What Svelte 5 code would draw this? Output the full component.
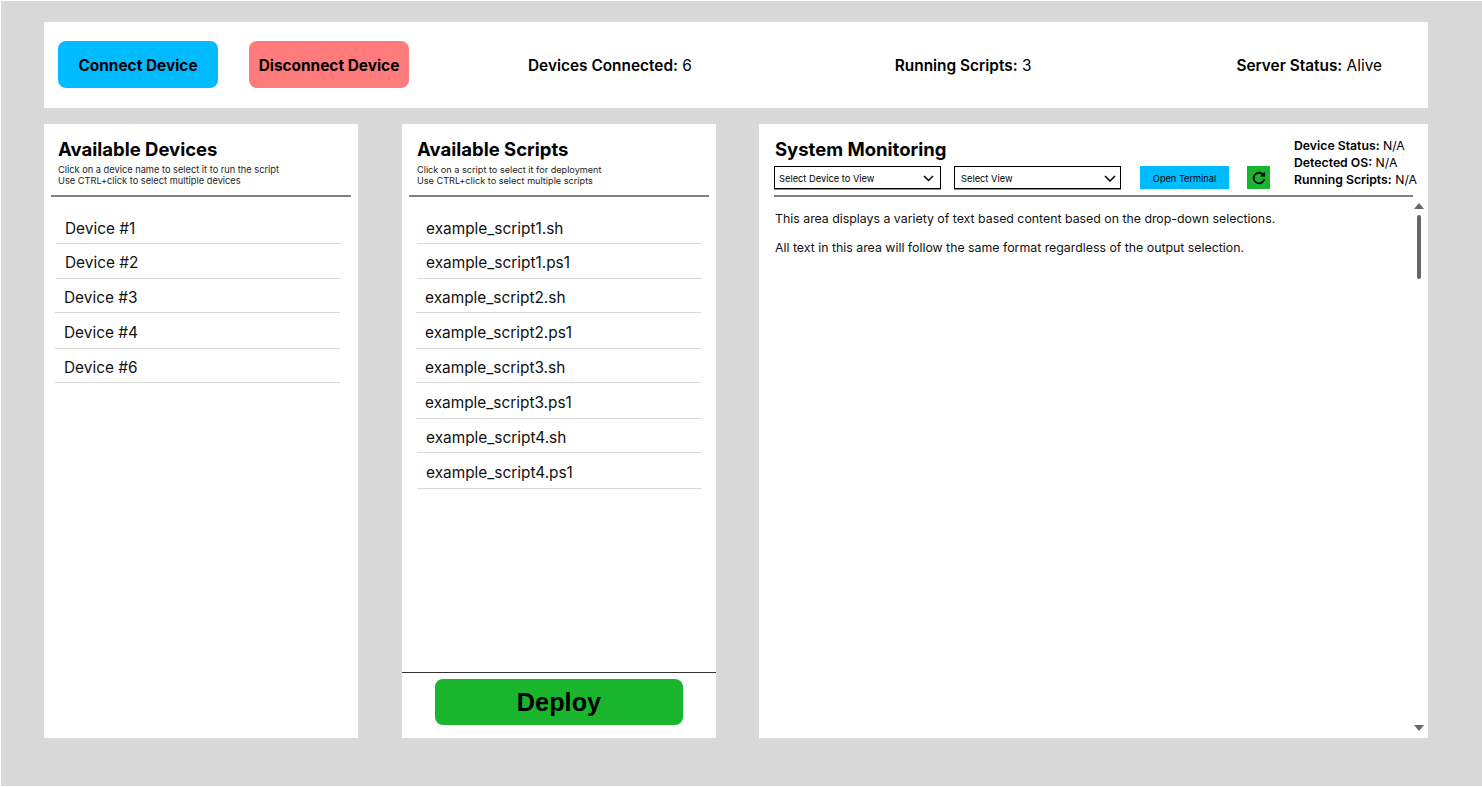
<script>
    const devices = [
        { name: 'Device #1', h: 34, shift: 1 },
        { name: 'Device #2', h: 35, shift: 1 },
        { name: 'Device #3', h: 34, shift: 0 },
        { name: 'Device #4', h: 36, shift: 0 },
        { name: 'Device #6', h: 34, shift: 0 }
    ]
    const scripts = [
        { name: 'example_script1.sh', h: 34, shift: 1 },
        { name: 'example_script1.ps1', h: 35, shift: 1 },
        { name: 'example_script2.sh', h: 34, shift: 0 },
        { name: 'example_script2.ps1', h: 36, shift: 0 },
        { name: 'example_script3.sh', h: 34, shift: 0 },
        { name: 'example_script3.ps1', h: 36, shift: 0 },
        { name: 'example_script4.sh', h: 34, shift: 1 },
        { name: 'example_script4.ps1', h: 36, shift: 1 }
    ]
</script>

<div class="frame">
    <header class="topbar">
        <button class="btn connect">Connect Device</button>
        <button class="btn disconnect">Disconnect Device</button>
        <div class="stat first"><b>Devices Connected:</b> 6</div>
        <div class="stat second"><b>Running Scripts:</b> 3</div>
        <div class="stat third"><b>Server Status:</b> Alive</div>
    </header>

    <main class="panels">
        <section class="panel devices">
            <div class="head">
                <h2>Available Devices</h2>
                <p>Click on a device name to select it to run the script<br />Use CTRL+click to select multiple devices</p>
            </div>
            <ul class="list">
                {#each devices as d}
                    <li class:shifted={d.shift} style="height:{d.h}px">{d.name}</li>
                {/each}
            </ul>
        </section>

        <section class="panel scripts">
            <div class="head">
                <h2>Available Scripts</h2>
                <p>Click on a script to select it for deployment<br />Use CTRL+click to select multiple scripts</p>
            </div>
            <ul class="list">
                {#each scripts as s}
                    <li class:shifted={s.shift} style="height:{s.h}px">{s.name}</li>
                {/each}
            </ul>
            <div class="deploy-row">
                <button class="deploy">Deploy</button>
            </div>
        </section>

        <section class="panel monitor">
            <div class="mon-head">
                <div class="mon-left">
                    <h2>System Monitoring</h2>
                    <div class="controls">
                        <div class="select">
                            <span>Select Device to View</span>
                            <svg width="11" height="7" viewBox="0 0 11 7"><path d="M1 1 5.5 5.5 10 1" fill="none" stroke="#000" stroke-width="1.5" /></svg>
                        </div>
                        <div class="select">
                            <span>Select View</span>
                            <svg width="12" height="7" viewBox="0 0 12 7"><path d="M1 1 6 6 11 1" fill="none" stroke="#000" stroke-width="1.5" /></svg>
                        </div>
                        <button class="terminal">Open Terminal</button>
                        <button class="refresh" aria-label="Refresh">
                            <svg width="14" height="14" viewBox="0 0 14 14">
                                <path d="M12.2 8.2A5.3 5.3 0 1 1 10.4 3" fill="none" stroke="#000" stroke-width="1.8" />
                                <path d="M8 5.6 13 5.8 12.8 .8Z" fill="#000" />
                            </svg>
                        </button>
                    </div>
                </div>
                <div class="mon-info">
                    <div><b>Device Status:</b> N/A</div>
                    <div><b>Detected OS:</b> N/A</div>
                    <div><b>Running Scripts:</b> N/A</div>
                </div>
            </div>
            <div class="output">
                <div class="text">
                    <p>This area displays a variety of text based content based on the drop-down selections.</p>
                    <p>All text in this area will follow the same format regardless of the output selection.</p>
                </div>
                <div class="scrollbar">
                    <span class="arrow up"></span>
                    <span class="thumb"></span>
                    <span class="arrow down"></span>
                </div>
            </div>
        </section>
    </main>
</div>

<style>
:global(body) {
    margin: 0;
    background: #fff;
}
* {
    box-sizing: border-box;
}
.frame {
    width: 1481px;
    height: 785px;
    margin: 1px 0 0 1px;
    padding: 21px 54px 0 43px;
    background: #d9d9d9;
    font-family: Inter, "Liberation Sans", sans-serif;
    color: #000;
}
.topbar {
    display: flex;
    align-items: center;
    height: 86px;
    padding-left: 14px;
    background: #fff;
}
button {
    border: none;
    font-family: inherit;
    color: #000;
    padding: 0;
}
.btn {
    width: 160px;
    height: 47px;
    margin-top: -1px;
    padding-top: 1px;
    border-radius: 8px;
    font-size: 15.4px;
    font-weight: 700;
}
.connect {
    background: #00bbff;
}
.disconnect {
    margin-left: 31px;
    background: #ff7b7b;
}
.stat {
    font-size: 15.4px;
    white-space: nowrap;
}
.stat b {
    font-weight: 600;
}
.first {
    margin-left: 119px;
}
.second {
    margin-left: 203px;
}
.third {
    margin-left: 205px;
}
.panels {
    display: flex;
    margin-top: 16px;
    height: 614px;
}
.panel {
    background: #fff;
    height: 100%;
}
.devices {
    width: 314px;
}
.scripts {
    width: 314px;
    margin-left: 44px;
    display: flex;
    flex-direction: column;
}
.monitor {
    width: 669px;
    margin-left: 43px;
    display: flex;
    flex-direction: column;
}
.head {
    height: 73px;
    margin: 0 7px;
    padding: 13px 0 0 7px;
    border-bottom: 2px solid #808080;
}
.scripts .head {
    padding-left: 8px;
}
h2 {
    margin: 0;
    font-size: 18.5px;
    line-height: 24px;
    font-weight: 700;
}
.head p {
    margin: 3px 0 0;
    font-size: 9.25px;
    line-height: 11px;
    color: #222;
}
.scripts .head p {
    font-size: 9.15px;
}
.list {
    list-style: none;
    margin: 13px 0 0;
    padding: 0;
    width: 285px;
}
.devices .list {
    margin-left: 12px;
}
.scripts .list {
    margin-left: 15px;
}
.list li {
    display: flex;
    align-items: center;
    padding: 3px 0 0 9px;
    font-size: 15.4px;
    border-bottom: 1px solid #d9d9d9;
    color: #111;
    position: relative;
    left: -1px;
}
.list li.shifted {
    left: 0;
}
.deploy-row {
    margin-top: auto;
    height: 66px;
    border-top: 1px solid #333;
    display: flex;
    justify-content: center;
    padding-top: 6px;
}
.deploy {
    width: 248px;
    height: 46px;
    border-radius: 8px;
    background: #19b52d;
    font-family: "Liberation Sans", Arial, sans-serif;
    font-size: 25.3px;
    font-weight: 700;
}
.mon-head {
    display: flex;
    height: 73px;
    margin: 0 15px;
    padding-top: 13px;
    border-bottom: 2px solid #808080;
}
.mon-left {
    flex: none;
}
.mon-left h2 {
    margin-left: 1px;
}
.controls {
    display: flex;
    align-items: center;
    margin-top: 5px;
}
.select {
    width: 167px;
    height: 23px;
    border: 1px solid #000;
    box-shadow: 0 1px 0 #888;
    display: flex;
    align-items: center;
    justify-content: space-between;
    padding: 1px 6px 0 4px;
    font-size: 9.3px;
    margin-right: 13px;
}
.select + .select {
    margin-right: 19px;
    padding: 1px 4px 0 6px;
}
.terminal {
    width: 89px;
    height: 23px;
    padding-top: 1px;
    background: #00bbff;
    font-size: 9.2px;
}
.refresh {
    width: 23px;
    height: 23px;
    margin-left: 18px;
    background: #19b52d;
    display: flex;
    align-items: center;
    justify-content: center;
}
.mon-info {
    flex: none;
    margin: -0.5px -12px 0 24px;
    font-size: 12.25px;
    line-height: 17px;
    white-space: nowrap;
}
.mon-info b {
    font-weight: 600;
}
.output {
    flex: 1;
    display: flex;
    justify-content: space-between;
    min-height: 0;
    padding-right: 4px;
}
.text {
    padding: 14px 0 0 16px;
    font-size: 12.33px;
    line-height: 15px;
    color: #111;
}
.text p {
    margin: 0 0 14px;
}
.scrollbar {
    width: 11px;
    padding: 6px 0 7px;
    display: flex;
    flex-direction: column;
    align-items: center;
}
.arrow {
    width: 0;
    height: 0;
    border-left: 5.5px solid transparent;
    border-right: 5.5px solid transparent;
}
.up {
    border-bottom: 6px solid #666;
}
.down {
    margin-top: auto;
    border-top: 6px solid #666;
}
.thumb {
    width: 4px;
    height: 64px;
    margin-top: 6px;
    border-radius: 2px;
    background: #666;
}
</style>
